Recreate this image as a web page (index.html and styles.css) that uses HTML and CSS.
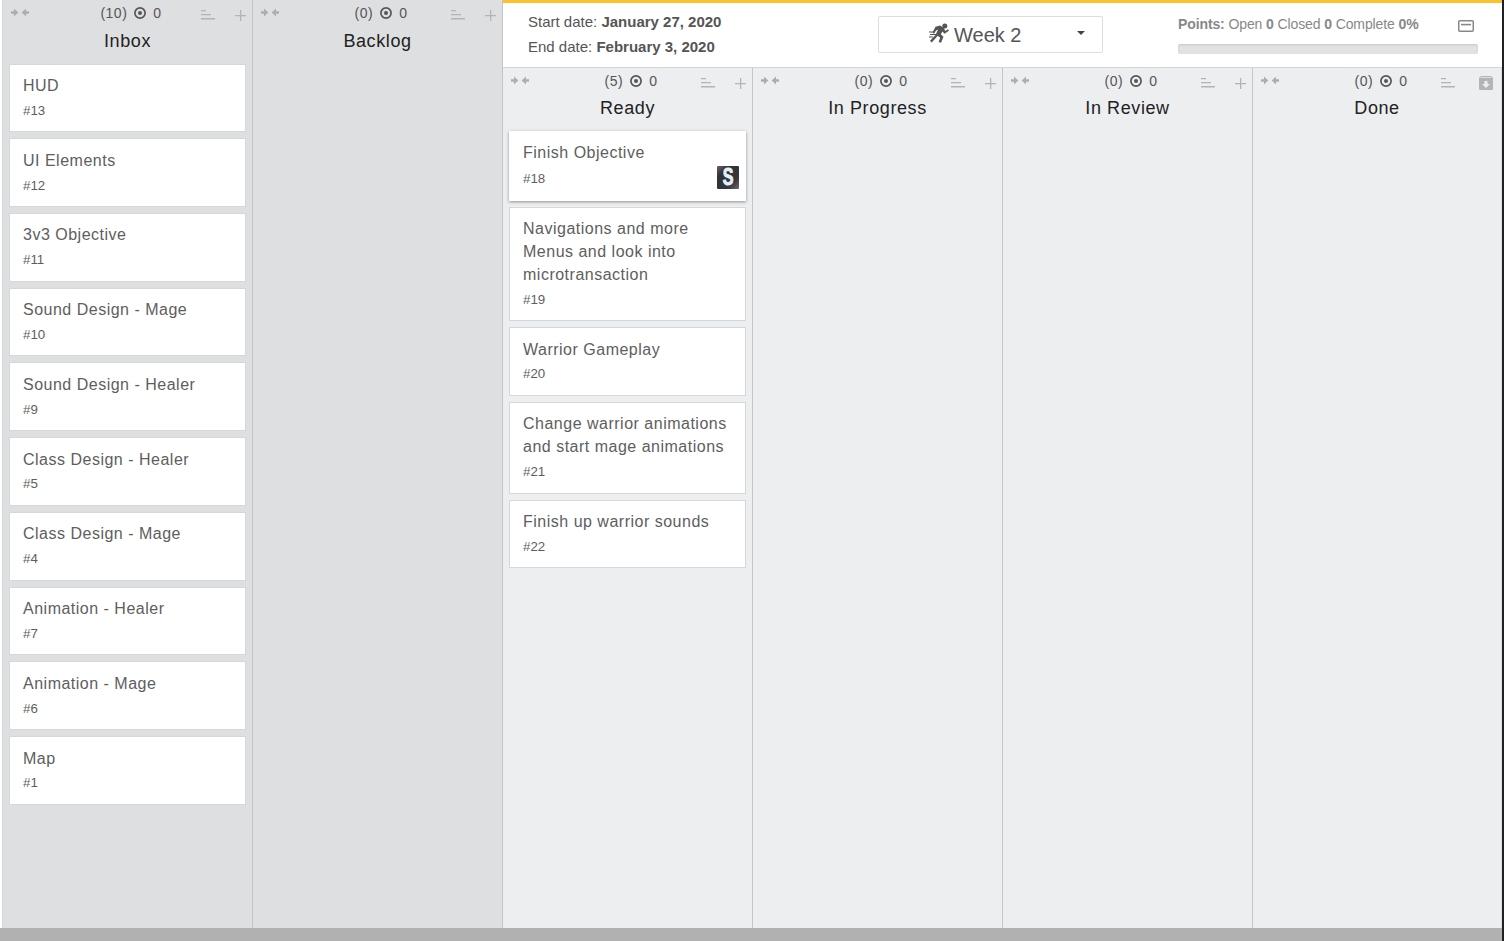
FILE: index.html
```
<!DOCTYPE html>
<html lang="en">
<head>
<meta charset="utf-8">
<title>Board - Week 2</title>
<link rel="stylesheet" href="styles.css">
</head>
<body>
<svg class="defs" aria-hidden="true">
  <symbol id="collapse" viewBox="0 0 18 9"><path d="M0 3.300h3V.5l4.300 4-4.300 4V5.700H0zM18 3.300h-3V.5l-4.300 4 4.300 4V5.700h3z"/></symbol>
  <symbol id="target" viewBox="0 0 12 12"><circle cx="6" cy="6" r="5.100" fill="none" stroke="currentColor" stroke-width="1.700"/><circle cx="6" cy="6" r="2"/></symbol>
  <symbol id="sort" viewBox="0 0 14 10"><path d="M0 0h5v1.300H0zM0 4h10v1.300H0zM0 8h14v1.400H0z"/></symbol>
  <symbol id="plus" viewBox="0 0 11 11"><path d="M5 0h1.300v5H11v1.300H6.300V11H5V6.300H0V5h5z"/></symbol>
  <symbol id="archive" viewBox="0 0 14 14"><path fill-rule="evenodd" d="M2 0h10l2 2v10.500q0 1.500-1.500 1.500h-11Q0 14 0 12.500V2zM2 1.300L1.500 2h11L12 1.300zM5.500 5v3H3l4 4 4-4H8.500V5z"/></symbol>
</svg>
<main class="board">
  <section class="column backlog">
    <header class="head">
      <svg class="collapse"><use href="#collapse"/></svg>
      <div class="count"><span>(10)</span><svg class="target"><use href="#target"/></svg><span>0</span></div>
      <div class="tools"><svg class="sort"><use href="#sort"/></svg><svg class="plus"><use href="#plus"/></svg></div>
    </header>
    <h2 class="name">Inbox</h2>
    <div class="cards">
      <article class="card"><h3 class="title">HUD</h3><p class="num">#13</p></article>
      <article class="card"><h3 class="title">UI Elements</h3><p class="num">#12</p></article>
      <article class="card"><h3 class="title">3v3 Objective</h3><p class="num">#11</p></article>
      <article class="card"><h3 class="title">Sound Design - Mage</h3><p class="num">#10</p></article>
      <article class="card"><h3 class="title">Sound Design - Healer</h3><p class="num">#9</p></article>
      <article class="card"><h3 class="title">Class Design - Healer</h3><p class="num">#5</p></article>
      <article class="card"><h3 class="title">Class Design - Mage</h3><p class="num">#4</p></article>
      <article class="card"><h3 class="title">Animation - Healer</h3><p class="num">#7</p></article>
      <article class="card"><h3 class="title">Animation - Mage</h3><p class="num">#6</p></article>
      <article class="card"><h3 class="title">Map</h3><p class="num">#1</p></article>
    </div>
  </section>
  <section class="column backlog">
    <header class="head">
      <svg class="collapse"><use href="#collapse"/></svg>
      <div class="count"><span>(0)</span><svg class="target"><use href="#target"/></svg><span>0</span></div>
      <div class="tools"><svg class="sort"><use href="#sort"/></svg><svg class="plus"><use href="#plus"/></svg></div>
    </header>
    <h2 class="name">Backlog</h2>
  </section>
  <div class="sprint">
    <header class="sprint-bar">
      <div class="dates">
        <div>Start date: <b>January 27, 2020</b></div>
        <div>End date: <b>February 3, 2020</b></div>
      </div>
      <div class="picker">
        <svg class="runner" viewBox="0 0 20 20"><circle cx="15.800" cy="3" r="2.500"/><path d="M6.500 3.800L11 2.600l4 2.500 1.200 2.900L19 6.300l.9 1.500-4.400 3-2-2.300-1.700 2.700 2.700 2.600-2.500 6-2.400-.8 1.600-4.200-2.400-2L5 17 2.700 19.500 1 17.800l5.300-5.500 2.700-5.500-1.900.6L5 10.700 3.500 9.500z"/><path d="M0 8.500h5v1H0zM1 11h6v1H1zM0 13.500h4v1H0z"/></svg>
        <span class="week">Week 2</span>
        <span class="caret"></span>
      </div>
      <div class="points">
        <div class="points-row">
          <span><b>Points:</b> Open <b>0</b> Closed <b>0</b> Complete <b>0%</b></span>
          <svg class="panel" viewBox="0 0 16 12"><rect x=".75" y=".75" width="14.500" height="10.500" rx="1" fill="none" stroke="currentColor" stroke-width="1.500"/><path d="M3 3.800h10v1.600H3z"/></svg>
        </div>
        <div class="progress"></div>
      </div>
    </header>
    <div class="lanes">
      <section class="column">
        <header class="head">
          <svg class="collapse"><use href="#collapse"/></svg>
          <div class="count"><span>(5)</span><svg class="target"><use href="#target"/></svg><span>0</span></div>
          <div class="tools"><svg class="sort"><use href="#sort"/></svg><svg class="plus"><use href="#plus"/></svg></div>
        </header>
        <h2 class="name">Ready</h2>
        <div class="cards">
          <article class="card raised"><h3 class="title">Finish Objective</h3><div class="foot"><p class="num">#18</p><span class="avatar"><span class="initial">S</span></span></div></article>
          <article class="card"><h3 class="title">Navigations and more Menus and look into microtransaction</h3><p class="num">#19</p></article>
          <article class="card"><h3 class="title">Warrior Gameplay</h3><p class="num">#20</p></article>
          <article class="card"><h3 class="title">Change warrior animations and start mage animations</h3><p class="num">#21</p></article>
          <article class="card"><h3 class="title">Finish up warrior sounds</h3><p class="num">#22</p></article>
        </div>
      </section>
      <section class="column">
        <header class="head">
          <svg class="collapse"><use href="#collapse"/></svg>
          <div class="count"><span>(0)</span><svg class="target"><use href="#target"/></svg><span>0</span></div>
          <div class="tools"><svg class="sort"><use href="#sort"/></svg><svg class="plus"><use href="#plus"/></svg></div>
        </header>
        <h2 class="name">In Progress</h2>
      </section>
      <section class="column">
        <header class="head">
          <svg class="collapse"><use href="#collapse"/></svg>
          <div class="count"><span>(0)</span><svg class="target"><use href="#target"/></svg><span>0</span></div>
          <div class="tools"><svg class="sort"><use href="#sort"/></svg><svg class="plus"><use href="#plus"/></svg></div>
        </header>
        <h2 class="name">In Review</h2>
      </section>
      <section class="column last">
        <header class="head">
          <svg class="collapse"><use href="#collapse"/></svg>
          <div class="count"><span>(0)</span><svg class="target"><use href="#target"/></svg><span>0</span></div>
          <div class="tools done"><svg class="sort"><use href="#sort"/></svg><svg class="archive"><use href="#archive"/></svg></div>
        </header>
        <h2 class="name">Done</h2>
      </section>
    </div>
  </div>
</main>
<footer class="scrollbar"></footer>
</body>
</html>
```
FILE: styles.css
```
* { box-sizing: border-box; }
body {
  margin: 0;
  width: 1504px;
  height: 941px;
  display: flex;
  flex-direction: column;
  overflow: hidden;
  border-right: 2px solid #202124;
  background: #fff;
  font-family: "Liberation Sans", Arial, sans-serif;
  color: #555;
}
svg { display: block; fill: currentColor; }
.defs { display: none; }
h2, h3, p { margin: 0; font-weight: 400; }
.board { display: flex; flex: 1; min-height: 0; padding-left: 2px; }
.column {
  width: 250px;
  flex: none;
  border-left: 1px solid #c3c5c7;
  background: #edeef0;
}
.backlog { background: #dedfe1; }
.backlog:first-child { border-left-color: #d5d6d7; }
.backlog + .backlog { width: 251px; border-right: 1px solid #c3c5c7; }
.head {
  height: 28px;
  display: grid;
  grid-template-columns: 84px 90px 1fr;
  align-items: start;
}
.collapse { width: 18px; height: 9px; margin: 8px 0 0 7.500px; color: #adadae; }
.count {
  display: flex;
  justify-content: center;
  align-items: center;
  gap: 7px;
  height: 26px;
  margin-left: -2px;
  font-size: 14px;
  letter-spacing: .5px;
}
.target { width: 12px; height: 12px; }
.tools { display: flex; padding: 10px 0 0 24px; color: #b3b4b5; }
.done { padding-left: 14px; }
.sort { width: 14px; height: 10px; }
.plus { width: 11px; height: 11px; margin-left: 20px; }
.archive { width: 14px; height: 14px; margin-left: 24px; margin-top: -2px; }
.name {
  font-size: 18px;
  line-height: 26px;
  letter-spacing: .6px;
  text-align: center;
  color: #222;
}
.cards {
  display: flex;
  flex-direction: column;
  gap: 6px;
  padding: 9.500px 6px 0;
}
.card {
  width: 236.500px;
  padding: 10.400px 12px 9.600px 13px;
  border: 1px solid #d5d8db;
  background: #fff;
  color: #5e5e5e;
}
.title { font-size: 16px; line-height: 22.900px; letter-spacing: .5px; }
.num { margin-top: 3px; font-size: 13.300px; line-height: 20.850px; }
.raised {
  height: 70px;
  border-color: #fff;
  box-shadow: 0 1px 3px rgba(0, 0, 0, .4);
}
.foot { display: flex; justify-content: space-between; margin-top: 1px; }
.avatar {
  width: 22px;
  height: 23px;
  margin: 0 -6px 0 0;
  border-radius: 1px;
  background: linear-gradient(135deg, #7b596a, #2f3237 28%, #34383c 72%, #7a6270);
  color: #e5f0f6;
  font-size: 23px;
  font-weight: 700;
  line-height: 23px;
  text-align: center;
}
.initial {
  display: block;
  transform: scaleX(.7);
  -webkit-text-stroke: 1px #e5f0f6;
}
.sprint { width: 999px; display: flex; flex-direction: column; }
.sprint-bar {
  height: 68px;
  display: flex;
  border-top: 3px solid #fdc02f;
  border-bottom: 1px solid #d5d6d8;
  background: #fff;
}
.dates { width: 375px; padding: 6px 0 0 25px; font-size: 15px; line-height: 25px; }
.picker {
  width: 225px;
  height: 37px;
  margin-top: 13px;
  padding-left: 50px;
  display: flex;
  align-items: center;
  border: 1px solid #ddd;
  border-radius: 2px;
}
.runner { width: 20px; height: 20px; margin-top: -3px; }
.week { width: 120px; padding: 1px 0 0 5px; font-size: 20px; }
.caret {
  margin: -3px 0 0 8px;
  border: 4px solid transparent;
  border-top-color: #444;
  border-bottom: 0;
}
.points { margin-left: 75px; width: 300px; padding-top: 12px; font-size: 14px; letter-spacing: -.11px; color: #888; }
.points-row { display: flex; justify-content: space-between; line-height: 19px; }
.panel { width: 16px; height: 12px; margin: 5px 4px 0 0; }
.progress {
  height: 10px;
  margin-top: 10px;
  border-radius: 2px;
  background: #e2e2e4;
  box-shadow: inset 0 1px 2px rgba(0, 0, 0, .12);
}
.lanes { display: flex; flex: 1; margin-left: -1px; }
.lanes .name { margin-top: -1px; margin-bottom: 1px; }
.lanes .cards { padding-top: 8.600px; }
.lanes .last { border-right: 1px solid #dcdddf; }
.scrollbar { height: 13px; background: #b1b1b1; }
```
